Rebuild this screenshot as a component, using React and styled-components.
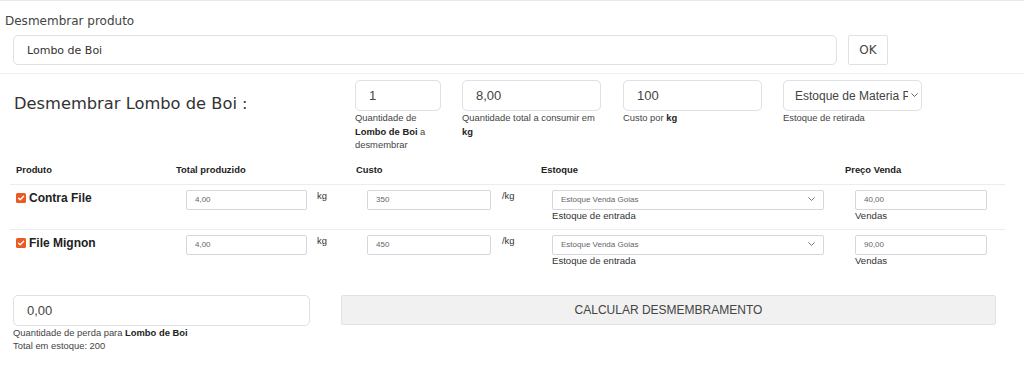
import React from "react";
import styled, { createGlobalStyle } from "styled-components";

const GlobalStyle = createGlobalStyle`
  html, body { margin: 0; padding: 0; background: #fff; }
  body {
    font-family: "Liberation Sans", Arial, sans-serif;
    color: #333;
  }
  * { box-sizing: border-box; }
`;

const Page = styled.div`
  width: 1024px;
  border-top: 1px solid #e8e8ee;
`;

const ProductSection = styled.section`
  padding: 12px 0 8px;
  border-bottom: 1px solid #efeff3;
`;

const SectionLabel = styled.div`
  font-family: "DejaVu Sans", sans-serif;
  font-size: 12px;
  line-height: 16px;
  color: #444;
  padding-left: 5px;
  margin-bottom: 6px;
`;

const SearchRow = styled.div`
  display: flex;
  gap: 11px;
  padding-left: 13px;
`;

const SearchInput = styled.div`
  width: 824px;
  height: 30px;
  border: 1px solid #dfe0e8;
  border-radius: 5px;
  padding: 0 13px;
  display: flex;
  align-items: center;
  font-family: "DejaVu Sans", sans-serif;
  font-size: 11px;
  color: #333;
`;

const OkButton = styled.div`
  width: 40px;
  height: 30px;
  border: 1px solid #e0e0e6;
  border-radius: 2px;
  display: flex;
  align-items: center;
  justify-content: center;
  font-family: "DejaVu Sans", sans-serif;
  font-size: 12px;
  color: #444;
`;

const ParamsRow = styled.section`
  display: flex;
  align-items: flex-start;
  padding: 6px 0 0 14px;
`;

const Heading = styled.h4`
  margin: 14px 0 0;
  width: 341px;
  font-family: "DejaVu Sans", sans-serif;
  font-weight: normal;
  font-size: 16.3px;
  line-height: 20px;
  color: #333;
`;

const FieldGroup = styled.div`
  width: ${(p) => p.$w}px;
  margin-right: ${(p) => p.$mr || 0}px;
`;

const BigInput = styled.div`
  height: 31px;
  border: 1px solid #dfe0e8;
  border-radius: 5px;
  padding: ${(p) => (p.$select ? "0 3px 0 11px" : "0 13px")};
  display: flex;
  align-items: center;
  gap: 3px;
  font-size: 13px;
  color: #444;
  overflow: hidden;
  white-space: nowrap;
`;

const SelectText = styled.span`
  flex: 1;
  overflow: hidden;
  white-space: nowrap;
  font-size: 12px;
`;

const Help = styled.div`
  font-size: 9.4px;
  line-height: 13.5px;
  color: #444;
  b { color: #222; }
`;

const Table = styled.div`
  margin: 8px 19px 0 10px;
`;

const Grid = styled.div`
  display: grid;
  grid-template-columns: 160px 180px 185px 304px 166px;
  border-bottom: ${(p) => (p.$border ? "1px solid #ececf0" : "none")};
`;

const HeadCell = styled.div`
  padding: 4px 6px 8px;
  font-size: 9.4px;
  line-height: 12px;
  font-weight: bold;
  color: #222;
`;

const Cell = styled.div`
  padding: 5px 0 7px ${(p) => p.$pl}px;
  display: flex;
  align-items: flex-start;
  gap: ${(p) => p.$gap || 0}px;
`;

const Stack = styled.div`
  display: flex;
  flex-direction: column;
`;

const ProductName = styled.label`
  display: flex;
  align-items: center;
  gap: 3px;
  font-size: 12px;
  line-height: 16px;
  font-weight: bold;
  color: #222;
`;

const SmallInput = styled.div`
  width: ${(p) => p.$w}px;
  height: 20px;
  border: 1px solid #d6d6dc;
  border-radius: 2px;
  padding: 0 8px;
  display: flex;
  align-items: center;
  justify-content: space-between;
  font-size: 8px;
  color: #666;
`;

const Unit = styled.span`
  font-size: 9.4px;
  line-height: 12px;
  color: #333;
`;

const SubLabel = styled.div`
  font-size: 9.6px;
  line-height: 12px;
  color: #333;
`;

const BottomRow = styled.section`
  display: flex;
  align-items: flex-start;
  gap: 31px;
  margin-top: 21px;
  padding-left: 13px;
`;

const LossGroup = styled.div`
  width: 297px;
`;

const CalcButton = styled.button`
  width: 655px;
  height: 30px;
  border: 1px solid #e2e2e2;
  border-radius: 2px;
  background: #f1f1f1;
  font-family: "Liberation Sans", Arial, sans-serif;
  font-size: 12px;
  color: #444;
  padding: 0;
  cursor: pointer;
`;

const Chevron = ({ size = 8, color = "#666" }) => (
  <svg width={size} height={size * 0.6} viewBox="0 0 10 6" fill="none">
    <path d="M1 1l4 4 4-4" stroke={color} strokeWidth="1.3" strokeLinecap="round" strokeLinejoin="round" />
  </svg>
);

const CheckBox = () => (
  <svg width="10" height="10" viewBox="0 0 10 10">
    <rect x="0" y="0" width="10" height="10" rx="1.5" fill="#ea5a22" />
    <path d="M2.5 5.2l1.7 1.6L7.6 3.2" stroke="#fff" strokeWidth="1.4" fill="none" strokeLinecap="round" strokeLinejoin="round" />
  </svg>
);

const rows = [
  { name: "Contra File", qty: "4,00", cost: "350", price: "40,00" },
  { name: "File Mignon", qty: "4,00", cost: "450", price: "90,00" },
];

export default function App() {
  return (
    <Page>
      <GlobalStyle />
      <ProductSection>
        <SectionLabel>Desmembrar produto</SectionLabel>
        <SearchRow>
          <SearchInput>Lombo de Boi</SearchInput>
          <OkButton>OK</OkButton>
        </SearchRow>
      </ProductSection>

      <ParamsRow>
        <Heading>Desmembrar Lombo de Boi :</Heading>
        <FieldGroup $w={86} $mr={21}>
          <BigInput>1</BigInput>
          <Help>
            Quantidade de <b>Lombo de Boi</b> a desmembrar
          </Help>
        </FieldGroup>
        <FieldGroup $w={139} $mr={22}>
          <BigInput>8,00</BigInput>
          <Help>
            Quantidade total a consumir em <b>kg</b>
          </Help>
        </FieldGroup>
        <FieldGroup $w={139} $mr={21}>
          <BigInput>100</BigInput>
          <Help>
            Custo por <b>kg</b>
          </Help>
        </FieldGroup>
        <FieldGroup $w={139}>
          <BigInput $select>
            <SelectText>Estoque de Materia Prima</SelectText>
            <Chevron size={7} color="#555" />
          </BigInput>
          <Help>Estoque de retirada</Help>
        </FieldGroup>
      </ParamsRow>

      <Table>
        <Grid $border>
          <HeadCell>Produto</HeadCell>
          <HeadCell>Total produzido</HeadCell>
          <HeadCell>Custo</HeadCell>
          <HeadCell>Estoque</HeadCell>
          <HeadCell>Preço Venda</HeadCell>
        </Grid>
        {rows.map((r, i) => (
          <Grid key={r.name} $border={i < rows.length - 1}>
            <Cell $pl={6}>
              <ProductName>
                <CheckBox />
                {r.name}
              </ProductName>
            </Cell>
            <Cell $pl={16} $gap={10}>
              <SmallInput $w={121}>{r.qty}</SmallInput>
              <Unit>kg</Unit>
            </Cell>
            <Cell $pl={17} $gap={11}>
              <SmallInput $w={124}>{r.cost}</SmallInput>
              <Unit>/kg</Unit>
            </Cell>
            <Cell $pl={17}>
              <Stack>
                <SmallInput $w={272}>
                  <span>Estoque Venda Goias</span>
                  <Chevron size={7} color="#666" />
                </SmallInput>
                <SubLabel>Estoque de entrada</SubLabel>
              </Stack>
            </Cell>
            <Cell $pl={16}>
              <Stack>
                <SmallInput $w={132}>{r.price}</SmallInput>
                <SubLabel>Vendas</SubLabel>
              </Stack>
            </Cell>
          </Grid>
        ))}
      </Table>

      <BottomRow>
        <LossGroup>
          <BigInput>0,00</BigInput>
          <Help>
            Quantidade de perda para <b>Lombo de Boi</b>
          </Help>
          <Help>Total em estoque: 200</Help>
        </LossGroup>
        <CalcButton>CALCULAR DESMEMBRAMENTO</CalcButton>
      </BottomRow>
    </Page>
  );
}
